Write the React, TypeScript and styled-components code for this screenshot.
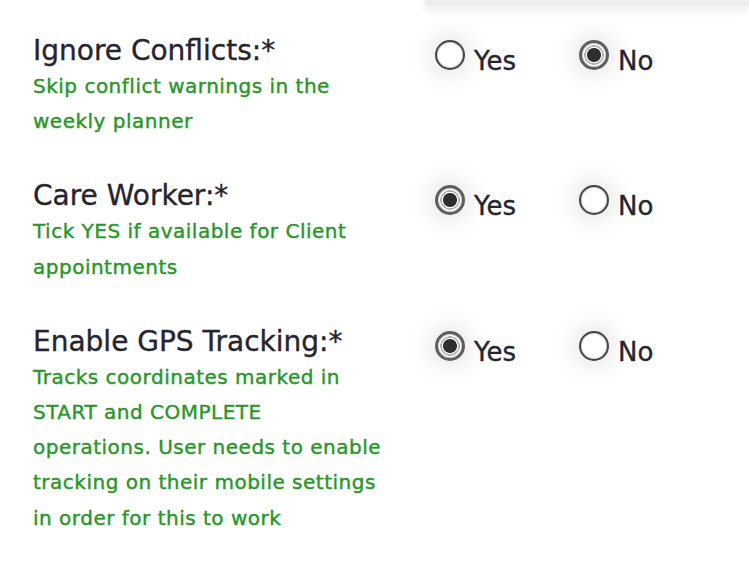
import React, { useState } from "react"
import styled, { createGlobalStyle } from "styled-components"

const GlobalStyle = createGlobalStyle`
  html, body {
    margin: 0;
    padding: 0;
    background: #ffffff;
  }
  body {
    font-family: "DejaVu Sans", "Liberation Sans", sans-serif;
  }
`

const Page = styled.div`
  width: 749px;
  min-height: 562px;
  overflow: hidden;
  background: #fff;
`

const TopCard = styled.div`
  height: 6px;
  margin-left: 425px;
  background: #eeeeee;
  box-shadow: 0 4px 10px rgba(0, 0, 0, 0.1);
`

const Form = styled.div`
  padding: 29px 0 0 33px;
`

const Field = styled.div`
  display: grid;
  grid-template-columns: 352px 1fr;
  column-gap: 50px;
  margin-bottom: 41px;
`

const Label = styled.div`
  font-size: 28px;
  line-height: 32px;
  color: #26242e;
  -webkit-text-stroke: 0.35px #26242e;
`

const Hint = styled.div`
  margin-top: 2px;
  font-size: 20px;
  letter-spacing: 0.5px;
  line-height: 35.2px;
  color: #289628;
  -webkit-text-stroke: 0.4px #289628;
`

const Options = styled.div`
  display: flex;
  align-items: flex-start;
`

const Option = styled.label`
  display: flex;
  align-items: flex-start;
  width: 144px;
  cursor: pointer;
`

const Radio = styled.input.attrs({ type: "radio" })`
  appearance: none;
  margin: 5px 9px 0 0;
  width: 30px;
  height: 30px;
  flex: none;
  border-radius: 50%;
  border: 2.5px solid #444;
  background: #fff;
  box-shadow: 0 0 22px 7px rgba(0, 0, 0, 0.09), inset 0 0 0 1px #d0d0d0;
  cursor: pointer;

  &:checked {
    border: 3px solid #5e5e5e;
    background: radial-gradient(circle, #2e2e2e 0 6.5px, #fff 7.5px 8px, #b0b0b0 8.5px 9.5px, #fff 10px);
  }
`

const OptionText = styled.span`
  padding-top: 10px;
  font-size: 26px;
  line-height: 32px;
  color: #26242e;
  -webkit-text-stroke: 0.35px #26242e;
`

type FieldDef = {
  key: string
  label: string
  hint: string
  value: boolean
}

const initial: FieldDef[] = [
  { key: "ignoreConflicts", label: "Ignore Conflicts:*", hint: "Skip conflict warnings in the weekly planner", value: false },
  { key: "careWorker", label: "Care Worker:*", hint: "Tick YES if available for Client appointments", value: true },
  {
    key: "gpsTracking",
    label: "Enable GPS Tracking:*",
    hint: "Tracks coordinates marked in START and COMPLETE operations. User needs to enable tracking on their mobile settings in order for this to work",
    value: true,
  },
]

export default function App() {
  const [fields, setFields] = useState<FieldDef[]>(initial)

  const setValue = (key: string, value: boolean) => {
    setFields(fields.map(f => (f.key === key ? { ...f, value } : f)))
  }

  return (
    <Page>
      <GlobalStyle />
      <TopCard />
      <Form>
        {fields.map(f => (
          <Field key={f.key}>
            <div>
              <Label>{f.label}</Label>
              <Hint>{f.hint}</Hint>
            </div>
            <Options>
              <Option>
                <Radio name={f.key} checked={f.value} onChange={() => setValue(f.key, true)} />
                <OptionText>Yes</OptionText>
              </Option>
              <Option>
                <Radio name={f.key} checked={!f.value} onChange={() => setValue(f.key, false)} />
                <OptionText>No</OptionText>
              </Option>
            </Options>
          </Field>
        ))}
      </Form>
    </Page>
  )
}
